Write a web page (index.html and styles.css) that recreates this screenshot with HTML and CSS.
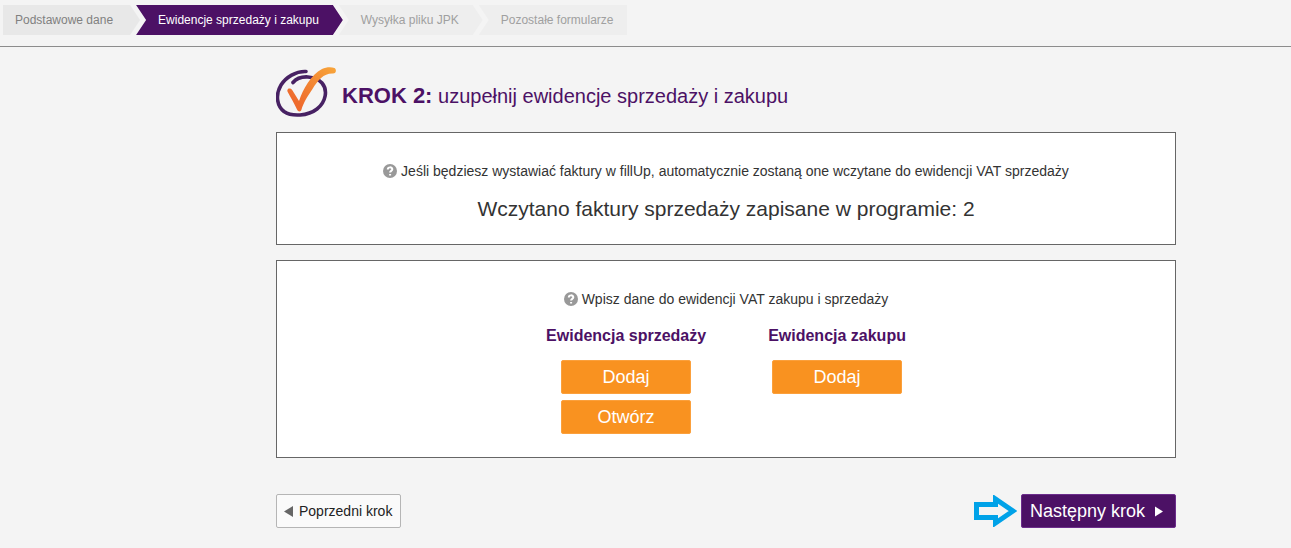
FILE: index.html
```html
<!DOCTYPE html>
<html lang="pl">
<head>
  <meta charset="UTF-8" />
  <title>fillUp | Ewidencje sprzedaży i zakupu</title>
  <meta name="viewport" content="width=device-width, initial-scale=1" />
  <link rel="stylesheet" href="styles.css">
</head>
<body>

  <!-- Steps -->
  <nav class="steps" aria-label="Kroki">
    <a href="#dane" class="step first">Podstawowe dane</a>
    <a href="#ewidencje" class="step active" aria-current="step">Ewidencje sprzedaży i zakupu</a>
    <a href="#jpk" class="step disabled">Wysyłka pliku JPK</a>
    <a href="#formularze" class="step disabled last">Pozostałe formularze</a>
  </nav>

  <main class="main">
    <div class="container">

      <header class="title">
        <svg class="logo" viewBox="0 0 60 50" aria-hidden="true">
          <defs>
            <linearGradient id="tick" x1="0" y1="1" x2="1" y2="0">
              <stop offset="0.2" stop-color="#ee6b2d" />
              <stop offset="1" stop-color="#f8a63a" />
            </linearGradient>
          </defs>
          <path d="M30 4.500 C20 4 10 10 5 18 C-1 28 1 39 8 44.500 C16 50 32 49 41 42 C50 35 52 23 46 16 C40 9 24 7 17 15.500" fill="none" stroke="#472163" stroke-width="3.600" stroke-linecap="round" />
          <path d="M11.500 23 C12 21 15 21 16.500 23.500 L23 34 C27 22 35 8 46 2 C50 0 55 -0.500 58.500 1 C61 3 60 6.500 57 6.500 C48 6 42 13 36.500 22 C31 30 27.500 36 25.500 42.500 C25 45 22 45 21 42.500 C18 36 14.500 30 12 25.500 C11.500 24.500 11 24 11.500 23 Z" fill="url(#tick)" />
        </svg>
        <h1><strong>KROK 2:</strong> uzupełnij ewidencje sprzedaży i zakupu</h1>
      </header>

      <section class="panel">
        <p class="hint">
          <svg class="help" viewBox="0 0 14 14" aria-hidden="true"><circle cx="7" cy="7" r="7" /><path d="M4.800 5.500 C4.800 2.700 9.300 2.700 9.300 5.300 C9.300 6.900 7.100 6.800 7.100 8.500 M7.100 9.900 V11.500" /></svg>
          Jeśli będziesz wystawiać faktury w fillUp, automatycznie zostaną one wczytane do ewidencji VAT sprzedaży
        </p>
        <p class="summary">Wczytano faktury sprzedaży zapisane w programie: 2</p>
      </section>

      <section class="panel">
        <p class="hint">
          <svg class="help" viewBox="0 0 14 14" aria-hidden="true"><circle cx="7" cy="7" r="7" /><path d="M4.800 5.500 C4.800 2.700 9.300 2.700 9.300 5.300 C9.300 6.900 7.100 6.800 7.100 8.500 M7.100 9.900 V11.500" /></svg>
          Wpisz dane do ewidencji VAT zakupu i sprzedaży
        </p>
        <div class="records">
          <div class="record">
            <h2>Ewidencja sprzedaży</h2>
            <button type="button" class="btn btn-orange">Dodaj</button>
            <button type="button" class="btn btn-orange">Otwórz</button>
          </div>
          <div class="record">
            <h2>Ewidencja zakupu</h2>
            <button type="button" class="btn btn-orange">Dodaj</button>
          </div>
        </div>
      </section>

      <!-- Prev / next -->
      <div class="actions">
        <button type="button" class="btn btn-prev">
          <svg class="caret" viewBox="0 0 9 11" aria-hidden="true"><path d="M9 0 V11 L0 5.500 Z" /></svg>
          Poprzedni krok
        </button>
        <div class="next">
          <svg class="pointer" viewBox="0 0 43 32" aria-hidden="true"><path d="M2.500 9.500 H21.500 V4 L39 16 L21.500 28 V22.500 H2.500 Z" /></svg>
          <button type="button" class="btn btn-next">
            Następny krok
            <svg class="caret" viewBox="0 0 9 11" aria-hidden="true"><path d="M1 0.500 L9 5.500 L1 10.500 Z" /></svg>
          </button>
        </div>
      </div>

    </div>
  </main>

</body>
</html>
```
FILE: styles.css
```css
body {
  margin: 0;
  font-family: "Liberation Sans", Arial, sans-serif;
  font-size: 14px;
  line-height: 20px;
  background: #f4f4f4;
  color: #333;
}

h1, h2, p {
  margin: 0;
}

/* steps */
.steps {
  display: flex;
  padding: 5px 3px 11px;
  border-bottom: 1px solid #8c8c8c;
}

.step {
  padding: 0 24px 0 22px;
  margin-left: -4px;
  font-size: 12px;
  line-height: 30px;
  color: #808080;
  background: #e8e8e8;
  text-decoration: none;
  white-space: nowrap;
  clip-path: polygon(0 0, calc(100% - 10px) 0, 100% 50%, calc(100% - 10px) 100%, 0 100%, 10px 50%);
}

.step.first {
  margin-left: 0;
  padding-left: 12px;
  padding-right: 27px;
  clip-path: polygon(0 0, calc(100% - 10px) 0, 100% 50%, calc(100% - 10px) 100%, 0 100%);
}

.step.active {
  background: #4c1165;
  color: #fff;
}

.step.disabled {
  background: #eee;
  color: #a0a0a0;
}

.step.last {
  padding-right: 14px;
  clip-path: polygon(0 0, 100% 0, 100% 100%, 0 100%, 10px 50%);
}

/* content */
.main {
  padding: 20px 0 20px 161px;
}

.container {
  max-width: 900px;
  margin: 0 auto;
}

.title {
  display: flex;
  align-items: center;
  gap: 6px;
  margin-bottom: 15px;
}

.logo {
  width: 60px;
  height: 50px;
}

h1 {
  padding-top: 8px;
  font-size: 20px;
  line-height: 24px;
  font-weight: normal;
  color: #4c1165;
}

h1 strong {
  font-size: 22px;
}

.panel {
  margin-bottom: 15px;
  padding: 28px 20px 23px;
  background: #fff;
  border: 1px solid #666;
  text-align: center;
}

.help {
  width: 14px;
  height: 14px;
  vertical-align: -2px;
  fill: #999;
}

.help path {
  fill: none;
  stroke: #fff;
  stroke-width: 2;
}

.summary {
  padding-top: 15px;
  font-size: 21px;
  line-height: 25px;
}

.records {
  display: flex;
  justify-content: center;
  gap: 62px;
  padding-top: 17px;
}

.record {
  display: flex;
  flex-direction: column;
  align-items: center;
  gap: 6px;
}

h2 {
  margin-bottom: 8px;
  font-size: 16px;
  line-height: 20px;
  color: #4c1165;
}

/* buttons */
.btn {
  display: flex;
  align-items: center;
  justify-content: center;
  height: 34px;
  padding: 0 8px;
  border: 1px solid;
  border-radius: 2px;
  font-family: inherit;
  font-size: 18px;
  color: #fff;
  cursor: pointer;
}

.btn-orange {
  width: 130px;
  background: #f99220;
  border-color: #fba03c;
}

.btn-prev {
  gap: 6px;
  padding: 0 8px 0 7px;
  font-size: 14px;
  color: #222;
  background: #fafafa;
  border-color: #b5b5b5;
}

.btn-next {
  gap: 9px;
  padding: 0 12px 0 8px;
  background: #4c1165;
  border-color: #6c2d8c;
}

.caret {
  width: 9px;
  height: 11px;
  fill: currentColor;
}

.btn-prev .caret {
  fill: #666;
}

.actions {
  display: flex;
  justify-content: space-between;
  padding-top: 21px;
}

.next {
  display: flex;
  align-items: center;
  gap: 4px;
}

.pointer {
  width: 43px;
  height: 32px;
  fill: none;
  stroke: #00a2e8;
  stroke-width: 5;
}
```
